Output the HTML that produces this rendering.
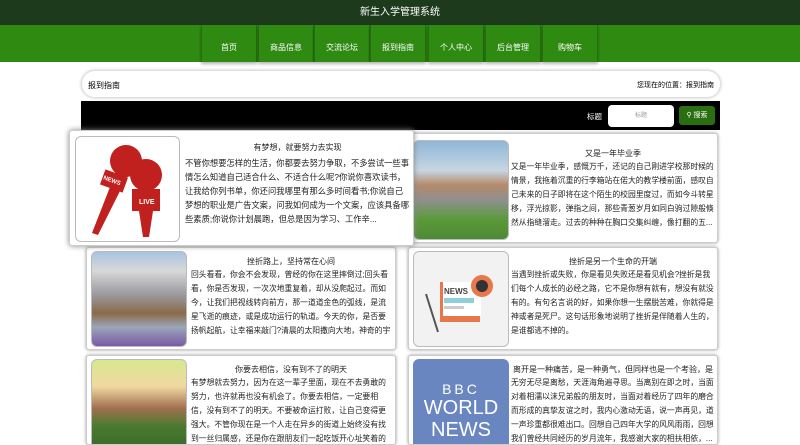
<!DOCTYPE html>
<html><head><meta charset="utf-8"><style>
*{margin:0;padding:0;box-sizing:border-box}
body{width:800px;height:433px;overflow:hidden;background:#fff;font-family:"Liberation Sans","Noto Sans CJK SC",sans-serif;position:relative}
.hd{position:absolute;left:0;top:0;width:800px;height:25px;background:#1e3a1c;color:#fff;font-size:10px;text-align:center;line-height:25px}
.nav{position:absolute;left:0;top:25px;width:800px;height:37px;background:#2f8a12}
.nav div{position:absolute;top:0;height:37px;width:56px;color:#fff;font-size:8px;text-align:center;line-height:46px;border-left:1px solid #256e0e;border-right:1px solid #256e0e;box-shadow:0 2px 3px rgba(0,0,0,.3);background:#2f8a12}
.bc{position:absolute;left:81px;top:70px;width:640px;height:28px;border:1px solid #ddd;border-radius:14px;box-shadow:0 0 3px #ccc;font-size:8px}
.bar{position:absolute;left:81px;top:101px;width:639px;height:29px;background:#000}
.card{position:absolute;background:#fff;border:1px solid #ccc;border-radius:3px;box-shadow:0 0 3px #999;overflow:hidden}
.img{position:absolute;left:4px;top:3px;width:96px;border-radius:6px;border:1px solid #bbb;overflow:hidden}
.t{position:absolute;font-size:8px;color:#222;text-align:center}
.p{position:absolute;font-size:7.8px;line-height:14px;color:#222;overflow:hidden}
</style></head><body>
<div class="hd">新生入学管理系统</div>
<div class="nav">
<div style="left:201px">首页</div><div style="left:258px">商品信息</div><div style="left:314px">交流论坛</div><div style="left:370px">报到指南</div><div style="left:428px">个人中心</div><div style="left:485px">后台管理</div><div style="left:542px">购物车</div>
</div>
<div class="bc"><span style="position:absolute;left:6px;top:9px">报到指南</span><span style="position:absolute;right:6px;top:9px;font-size:7px">您现在的位置：报到指南</span></div>
<div class="bar"><span style="position:absolute;left:506px;top:10px;color:#fff;font-size:7.5px">标题</span>
<div style="position:absolute;left:527px;top:4px;width:66px;height:22px;background:#fff;border-radius:4px;font-size:6px;color:#999;text-align:center;line-height:22px">标题</div>
<div style="position:absolute;left:598px;top:5px;width:36px;height:19px;background:#2a6e12;border-radius:3px;color:#fff;font-size:7px;text-align:center;line-height:19px">⚲ 搜索</div></div>

<div class="card" style="left:408px;top:133px;width:310px;height:110px"><div class="img" style="top:6px;height:100px;background:linear-gradient(#8fb6d8 0,#c7d6e2 30%,#b58a6a 45%,#8f8f8f 60%,#5a9a3a 80%,#4f8a34)"></div>
<div class="t" style="left:104px;width:200px;top:14px">又是一年毕业季</div>
<div class="p" style="left:102px;width:203px;top:26px;height:70px">又是一年毕业季，感慨万千，还记的自己刚进学校那时候的情景，我拖着沉重的行李箱站在偌大的教学楼前面，感叹自己未来的日子即将在这个陌生的校园里度过，而如今斗转星移，浮光掠影，弹指之间，那些青葱岁月如同白驹过隙般倏然从指缝溜走。过去的种种在胸口交集纠缠，像打翻的五...</div></div>

<div class="card" style="left:86px;top:247px;width:310px;height:103px"><div class="img" style="top:3px;height:96px;background:linear-gradient(#a8c4e0 0,#d8d8d8 20%,#9a9aa0 45%,#8a6a4a 65%,#9aa6b8 80%,#7a5aa6)"></div>
<div class="t" style="left:104px;width:200px;top:8px">挫折路上，坚持常在心间</div>
<div class="p" style="left:104px;width:200px;top:20px;height:70px">回头看看，你会不会发现，曾经的你在这里摔倒过;回头看看，你是否发现，一次次地重复着，却从没爬起过。而如今，让我们把视线转向前方，那一道道金色的弧线，是流星飞逝的痕迹，或是成功运行的轨道。今天的你，是否要扬帆起航，让幸福来敲门?清晨的太阳撒向大地，神奇的宇宙...</div></div>

<div class="card" style="left:408px;top:247px;width:310px;height:103px"><div class="img" style="top:3px;height:96px;background:#f2f2f2"><svg width="96" height="96" viewBox="0 0 96 96"><line x1="12" y1="42" x2="24" y2="80" stroke="#555" stroke-width="2"/><rect x="26" y="30" width="40" height="40" fill="#e8774a"/><rect x="29" y="30" width="38" height="34" fill="#fff"/><text x="30" y="42" font-size="8" font-weight="bold" fill="#444">NEWS</text><rect x="30" y="46" width="30" height="5" fill="#8ecfdc"/><rect x="30" y="54" width="20" height="3" fill="#ccc"/><circle cx="68" cy="34" r="11" fill="#e8774a"/><circle cx="68" cy="34" r="6" fill="#333"/></svg></div>
<div class="t" style="left:104px;width:200px;top:8px">挫折是另一个生命的开端</div>
<div class="p" style="left:102px;width:203px;top:20px;height:72px">当遇到挫折或失败，你是看见失败还是看见机会?挫折是我们每个人成长的必经之路，它不是你想有就有，想没有就没有的。有句名言说的好，如果你想一生摆脱苦难，你就得是神或者是死尸。这句话形象地说明了挫折是伴随着人生的，是谁都逃不掉的。</div></div>

<div class="card" style="left:86px;top:355px;width:310px;height:90px"><div class="img" style="top:3px;height:90px;background:linear-gradient(#d8e890 0,#f0d8a0 30%,#a07050 55%,#4a7a30 75%,#3a6a28)"></div>
<div class="t" style="left:104px;width:200px;top:8px">你要去相信，没有到不了的明天</div>
<div class="p" style="left:104px;width:200px;top:20px;height:70px">有梦想就去努力，因为在这一辈子里面，现在不去勇敢的努力，也许就再也没有机会了。你要去相信，一定要相信，没有到不了的明天。不要被命运打败，让自己变得更强大。不管你现在是一个人走在异乡的街道上始终没有找到一丝归属感，还是你在跟朋友们一起吃饭开心址笑着的时候闪过一...</div></div>

<div class="card" style="left:408px;top:355px;width:310px;height:90px"><div class="img" style="top:3px;height:90px;background:#6a86c0;color:#fff;text-align:center;border:none"><div style="margin-top:22px;font-size:14px;letter-spacing:3px">BBC</div><div style="font-size:20px;line-height:22px">WORLD</div><div style="font-size:20px;line-height:22px">NEWS</div></div>
<div class="t" style="left:104px;width:200px;top:8px;white-space:nowrap;overflow:hidden">离开是一种痛苦，是一种勇气，但同样也是一个考验，是...</div>
<div class="p" style="left:102px;width:203px;top:20px;height:70px">无穷无尽是离愁，天涯海角遍寻思。当离别在即之时，当面对着相濡以沫兄弟般的朋友时，当面对着经历了四年的磨合而形成的真挚友谊之时，我内心激动无语，说一声再见，道一声珍重都很难出口。回想自己四年大学的风风雨雨，回想我们曾经共同经历的岁月流年，我感谢大家的相扶相依，...</div></div>

<div class="card" style="left:69px;top:130px;width:345px;height:116px;box-shadow:0 0 6px #888"><div class="img" style="left:5px;top:5px;width:105px;height:106px;background:#fff"><svg width="105" height="106" viewBox="0 0 105 106"><g fill="#c0201e"><circle cx="50" cy="24" r="16"/><path d="M40 36 L34 50 L16 96 L22 98 L44 54 Z"/><rect x="26" y="36" width="24" height="16" transform="rotate(20 38 44)"/><circle cx="70" cy="38" r="16"/><rect x="56" y="52" width="28" height="22"/><path d="M63 74 L77 74 L73 100 L67 100 Z"/></g><text x="63" y="67" font-size="7" fill="#fff" font-weight="bold">LIVE</text><text x="27" y="46" font-size="6" fill="#fff" font-weight="bold" transform="rotate(20 38 44)">NEWS</text></svg></div>
<div class="t" style="left:115px;width:225px;top:11px">有梦想，就要努力去实现</div>
<div class="p" style="left:115px;width:225px;top:25px;height:72px;font-size:8.3px">不管你想要怎样的生活，你都要去努力争取，不多尝试一些事情怎么知道自己适合什么、不适合什么呢?你说你喜欢读书，让我给你列书单，你还问我哪里有那么多时间看书;你说自己梦想的职业是广告文案，问我如何成为一个文案，应该具备哪些素质;你说你计划晨跑，但总是因为学习、工作辛...</div></div>
</body></html>
